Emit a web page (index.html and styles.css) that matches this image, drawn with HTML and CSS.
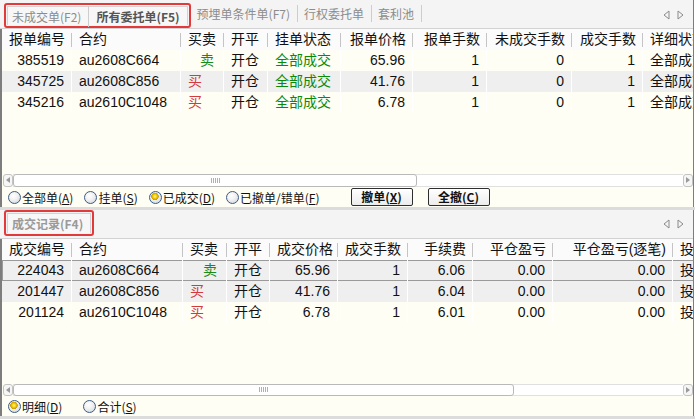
FILE: index.html
```html
<!DOCTYPE html>
<html lang="zh-CN">
<head>
<meta charset="utf-8">
<title>委托与成交</title>
<link rel="stylesheet" href="styles.css">
</head>
<body>
<div class="app">
  <section class="pane pane-top">
    <div class="tabbar">
      <div class="hl-box">
        <div class="tabframe">
          <span class="tab first">未成交单(F2)</span>
          <span class="tab active last">所有委托单(F5)</span>
        </div>
      </div>
      <span class="tab">预埋单条件单(F7)</span>
      <span class="tab">行权委托单</span>
      <span class="tab">套利池</span>
      <div class="arrows">
        <svg width="7" height="10" viewBox="0 0 7 10"><path d="M6 1 L1 5 L6 9 Z" fill="none" stroke="#8a8a8a" stroke-width="1"/></svg>
        <svg width="7" height="10" viewBox="0 0 7 10"><path d="M1 1 L6 5 L1 9 Z" fill="none" stroke="#8a8a8a" stroke-width="1"/></svg>
      </div>
    </div>
    <div class="grid">
      <div class="row head cols-top">
        <div class="c r">报单编号</div><div class="c">合约</div><div class="c">买卖</div><div class="c">开平</div><div class="c">挂单状态</div><div class="c r">报单价格</div><div class="c r">报单手数</div><div class="c r">未成交手数</div><div class="c r">成交手数</div><div class="c">详细状态</div>
      </div>
      <div class="row cols-top">
        <div class="c r">385519</div><div class="c">au2608C664</div><div class="c r sell">卖</div><div class="c">开仓</div><div class="c ok">全部成交</div><div class="c r">65.96</div><div class="c r">1</div><div class="c r">0</div><div class="c r">1</div><div class="c">全部成交</div>
      </div>
      <div class="row alt cols-top">
        <div class="c r">345725</div><div class="c">au2608C856</div><div class="c buy">买</div><div class="c">开仓</div><div class="c ok">全部成交</div><div class="c r">41.76</div><div class="c r">1</div><div class="c r">0</div><div class="c r">1</div><div class="c">全部成交</div>
      </div>
      <div class="row cols-top">
        <div class="c r">345216</div><div class="c">au2610C1048</div><div class="c buy">买</div><div class="c">开仓</div><div class="c ok">全部成交</div><div class="c r">6.78</div><div class="c r">1</div><div class="c r">0</div><div class="c r">1</div><div class="c">全部成交</div>
      </div>
    </div>
    <div class="hscroll">
      <div class="sb-btn"><svg width="4" height="6" viewBox="0 0 4 6"><path d="M4 0 L0 3 L4 6 Z" fill="#9a9a9a"/></svg></div>
      <div class="sb-track">
        <div class="sb-thumb thumb-top"><span class="grip"></span></div>
      </div>
      <div class="sb-btn"><svg width="4" height="6" viewBox="0 0 4 6"><path d="M0 0 L4 3 L0 6 Z" fill="#9a9a9a"/></svg></div>
    </div>
    <div class="optbar">
      <label class="opt"><span class="radio"></span>全部单(<u>A</u>)</label>
      <label class="opt"><span class="radio"></span>挂单(<u>S</u>)</label>
      <label class="opt"><span class="radio on"></span>已成交(<u>D</u>)</label>
      <label class="opt"><span class="radio"></span>已撤单/错单(<u>F</u>)</label>
      <button class="btn first-btn">撤单(<u>X</u>)</button>
      <button class="btn">全撤(<u>C</u>)</button>
    </div>
  </section>
  <div class="divider"></div>
  <section class="pane pane-bottom">
    <div class="tabbar">
      <div class="hl-box">
        <div class="tabframe">
          <span class="tab active dim first last">成交记录(F4)</span>
        </div>
      </div>
      <div class="arrows">
        <svg width="7" height="10" viewBox="0 0 7 10"><path d="M6 1 L1 5 L6 9 Z" fill="none" stroke="#8a8a8a" stroke-width="1"/></svg>
        <svg width="7" height="10" viewBox="0 0 7 10"><path d="M1 1 L6 5 L1 9 Z" fill="none" stroke="#8a8a8a" stroke-width="1"/></svg>
      </div>
    </div>
    <div class="grid">
      <div class="row head cols-bot">
        <div class="c r">成交编号</div><div class="c">合约</div><div class="c">买卖</div><div class="c">开平</div><div class="c r">成交价格</div><div class="c r">成交手数</div><div class="c r">手续费</div><div class="c r">平仓盈亏</div><div class="c r">平仓盈亏(逐笔)</div><div class="c">投机套保</div>
      </div>
      <div class="row alt sel cols-bot">
        <div class="c r">224043</div><div class="c">au2608C664</div><div class="c r sell">卖</div><div class="c">开仓</div><div class="c r">65.96</div><div class="c r">1</div><div class="c r">6.06</div><div class="c r">0.00</div><div class="c r">0.00</div><div class="c">投机</div>
      </div>
      <div class="row alt cols-bot">
        <div class="c r">201447</div><div class="c">au2608C856</div><div class="c buy">买</div><div class="c">开仓</div><div class="c r">41.76</div><div class="c r">1</div><div class="c r">6.04</div><div class="c r">0.00</div><div class="c r">0.00</div><div class="c">投机</div>
      </div>
      <div class="row cols-bot">
        <div class="c r">201124</div><div class="c">au2610C1048</div><div class="c buy">买</div><div class="c">开仓</div><div class="c r">6.78</div><div class="c r">1</div><div class="c r">6.01</div><div class="c r">0.00</div><div class="c r">0.00</div><div class="c">投机</div>
      </div>
    </div>
    <div class="hscroll">
      <div class="sb-btn"><svg width="4" height="6" viewBox="0 0 4 6"><path d="M4 0 L0 3 L4 6 Z" fill="#9a9a9a"/></svg></div>
      <div class="sb-track">
        <div class="sb-thumb thumb-bot"><span class="grip"></span></div>
      </div>
      <div class="sb-btn"><svg width="4" height="6" viewBox="0 0 4 6"><path d="M0 0 L4 3 L0 6 Z" fill="#9a9a9a"/></svg></div>
    </div>
    <div class="optbar">
      <label class="opt"><span class="radio on"></span>明细(<u>D</u>)</label>
      <label class="opt wide"><span class="radio"></span>合计(<u>S</u>)</label>
    </div>
  </section>
  <div class="footer-strip"></div>
</div>
</body>
</html>
```
FILE: styles.css
```css
* { box-sizing: border-box; }
body {
  margin: 0;
  background: #ffffff;
  font-family: "Liberation Sans", "Noto Sans CJK SC", sans-serif;
  color: #111;
}
.app {
  width: 695px;
  height: 419px;
  display: flex;
  flex-direction: column;
  overflow: hidden;
}
.pane {
  display: flex;
  flex-direction: column;
  width: 694px;
  border-right: 1px solid #7d7d7d;
}
.pane-top { height: 207px; }
.pane-bottom { height: 206px; }

/* tab bar */
.tabbar {
  height: 29px;
  flex: none;
  background: #f4f4f4;
  border-bottom: 1px solid #d2d2d2;
  display: flex;
  align-items: flex-start;
  padding-top: 3px;
  padding-left: 4px;
}
.pane-bottom .tabbar { height: 29px; padding-top: 0; }
.hl-box {
  border: 2px solid #e23a3a;
  border-radius: 3px;
  height: 25px;
  padding: 1px;
  display: flex;
}
.pane-bottom .hl-box { height: 26px; }
.tabframe {
  display: flex;
  align-items: center;
  border: 1px solid #d3d3d3;
  border-bottom: none;
  background: #f7f7f7;
}
.tab {
  font-family: "Noto Sans CJK SC", "Liberation Sans", sans-serif;
  font-size: 12px;
  color: #8c8c8c;
  padding: 0 7px 0 6px;
  line-height: 17px;
  margin-top: 2px;
  border-right: 1px solid #cdcdcd;
  white-space: nowrap;
}
.tabframe .tab { margin-top: 0; line-height: 21px; padding: 0 7px; }
.tabframe .tab.first { padding-left: 4px; }
.tab.last { border-right: none; }
.tab.active { color: #555; font-weight: bold; }
.tab.dim { color: #9a9a9a; }
.arrows {
  margin-left: auto;
  margin-right: 9px;
  margin-top: 7px;
  display: flex;
  gap: 7px;
}
.pane-bottom .arrows { margin-top: 9px; }

/* grid */
.grid {
  flex: 1;
  background: #fffef5;
  border-left: 2px solid #7d7d7d;
  overflow: hidden;
  font-size: 14px;
}
.row {
  display: grid;
  height: 21px;
  width: 760px;
}
.cols-top { grid-template-columns: 70px 109px 43px 44px 73px 72px 74px 85px 71px 119px; }
.cols-bot { grid-template-columns: 70px 111px 44px 43px 68px 70px 65px 80px 120px 109px; }
.c {
  padding: 0 7px;
  line-height: 21px;
  white-space: nowrap;
  overflow: hidden;
  border-right: 1px solid #ffffff;
}
.c.r { text-align: right; }
.row.head {
  background: #fbfbfb;
  height: 21px;
}
.pane-bottom .row.head { height: 21px; }
.row.head .c {
  color: #111;
  border-right: none;
  background-image: linear-gradient(#c4c4c4, #c4c4c4);
  background-size: 1px 14px;
  background-position: right 4px;
  background-repeat: no-repeat;
}
.row.alt { background: #efefef; }
.row.sel { box-shadow: inset 0 0 0 1px #9a9a9a; }
.sell { color: #1a8a1a; padding-right: 9px; }
.buy { color: #d33a3a; }
.ok { color: #0a8a0a; }

/* scroll bar */
.hscroll {
  height: 14px;
  flex: none;
  background: #fffef5;
  border-left: 2px solid #7d7d7d;
  display: flex;
  align-items: center;
  padding: 0 0 0 1px;
}
.pane-bottom .hscroll { height: 13px; }
.sb-btn {
  width: 10px;
  height: 13px;
  border: 1px solid #c3c3c3;
  border-radius: 3px;
  background: #f6f6f6;
  display: flex;
  align-items: center;
  justify-content: center;
  flex: none;
}
.pane-bottom .sb-btn { height: 12px; }
.sb-track {
  flex: 1;
  height: 13px;
  background: #ffffff;
  border-top: 1px solid #e0e0e0;
  border-bottom: 1px solid #e0e0e0;
  display: flex;
}
.pane-bottom .sb-track { height: 12px; }
.sb-thumb {
  height: 100%;
  margin-top: -1px;
  margin-bottom: -1px;
  box-sizing: content-box;
  border: 1px solid #b9b9b9;
  border-radius: 3px;
  background: #ffffff;
  display: flex;
  align-items: center;
  justify-content: center;
}
.thumb-top { width: 402px; }
.thumb-bot { width: 499px; }
.grip {
  width: 9px;
  height: 5px;
  background-image: repeating-linear-gradient(90deg, #b0b0b0 0 1px, transparent 1px 2px);
}

/* option bar */
.optbar {
  height: 20px;
  flex: none;
  background: #fffef5;
  border-left: 2px solid #7d7d7d;
  display: flex;
  align-items: center;
  padding-left: 6px;
  font-family: "Noto Sans CJK SC", sans-serif;
  font-size: 12px;
  color: #111;
}
.opt {
  display: flex;
  align-items: center;
  margin-right: 11px;
  white-space: nowrap;
}
.opt.wide { margin-left: 10px; }
.radio {
  width: 13px;
  height: 13px;
  border-radius: 50%;
  border: 1px solid #3b5b86;
  background: radial-gradient(circle at 40% 35%, #ffffff 0, #f2f2f2 40%, #c9d1db 100%);
  margin-right: 1px;
  flex: none;
}
.radio.on {
  background:
    radial-gradient(circle at 45% 40%, #fff59a 0, #f2cc00 2px, #c99a00 3.5px, transparent 4px),
    radial-gradient(circle at 40% 35%, #ffffff 0, #f2f2f2 40%, #c9d1db 100%);
}
.btn {
  width: 62px;
  height: 18px;
  margin-right: 15px;
  border: 1px solid #2e2e2e;
  border-radius: 2px;
  background: linear-gradient(#ffffff, #ececec);
  font-family: "Noto Sans CJK SC", sans-serif;
  font-size: 12px;
  font-weight: bold;
  color: #111;
  padding: 0;
  line-height: 16px;
}
.first-btn { margin-left: 20px; }

.divider {
  height: 3px;
  flex: none;
  background: #dcdcdc;
}
.footer-strip {
  flex: 1;
  background: #dcdcdc;
}
```
